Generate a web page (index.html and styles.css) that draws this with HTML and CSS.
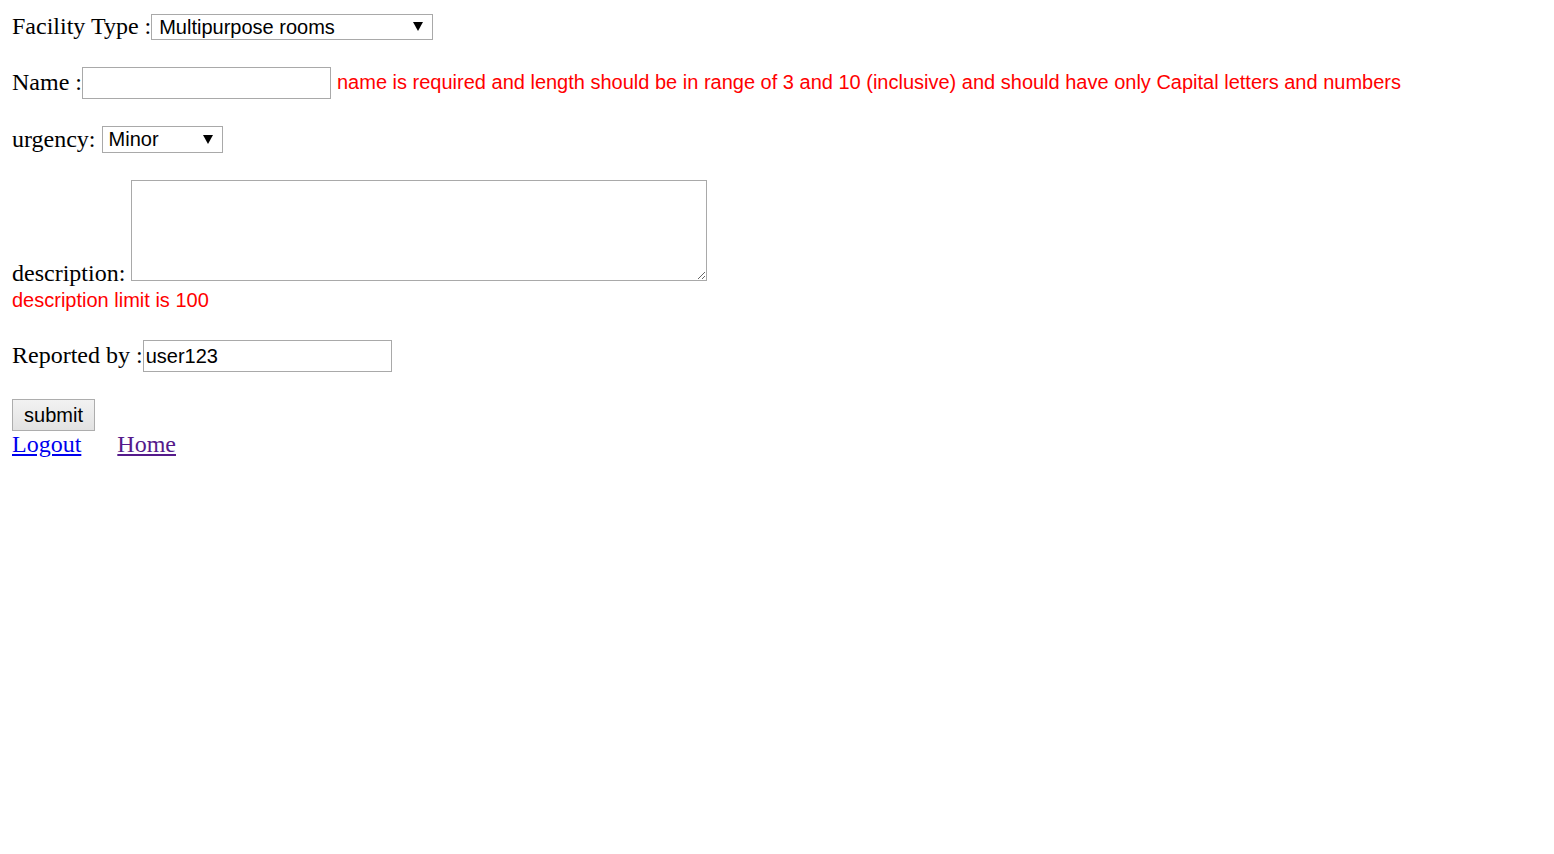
FILE: index.html
```html
<!DOCTYPE html>
<html>
<head>
<meta charset="utf-8">
<title>Report</title>
<link rel="stylesheet" href="styles.css">
</head>
<body>
<form class="form">
  <div class="row row-first">
    <label class="lbl">Facility Type :</label>
    <span class="sel sel-facility">
      <select class="select"><option>Multipurpose rooms</option></select>
    </span>
  </div>
  <div class="row row-name">
    <label class="lbl">Name :</label>
    <input class="text" type="text">
    <span class="err err-inline">name is required and length should be in range of 3 and 10 (inclusive) and should have only Capital letters and numbers</span>
  </div>
  <div class="row row-urgency">
    <label class="lbl">urgency:</label>
    <span class="sel sel-urgency">
      <select class="select"><option>Minor</option></select>
    </span>
  </div>
  <div class="row row-desc">
    <label class="lbl lbl-desc">description:</label>
    <textarea class="area"></textarea>
  </div>
  <div class="err err-block">description limit is 100</div>
  <div class="row row-reported">
    <label class="lbl">Reported by :</label>
    <input class="text text-reported" type="text" value="user123">
  </div>
  <div class="row-btn">
    <button type="button" class="btn">submit</button>
  </div>
  <div class="links">
    <a class="link" href="#">Logout</a>
    <a class="link link-visited" href="#">Home</a>
  </div>
</form>
</body>
</html>
```
FILE: styles.css
```css
html, body {
  background: #fff;
}
body {
  margin: 12px;
  font-family: "Liberation Serif", "Times New Roman", serif;
  font-size: 24px;
  color: #000;
}
.form {
  display: flex;
  flex-direction: column;
  align-items: flex-start;
}
.row {
  display: flex;
  align-items: center;
}
.row-first {
  height: 30px;
}
.row-name {
  margin-top: 25px;
  height: 32px;
}
.row-urgency {
  margin-top: 27px;
  height: 27px;
}
.row-desc {
  margin-top: 27px;
  align-items: flex-end;
}
.row-reported {
  margin-top: 28px;
  height: 32px;
}
.lbl {
  line-height: 1;
  white-space: pre;
  margin-bottom: 2px;
}
.lbl-desc {
  margin-bottom: -4px;
  margin-right: 6px;
}
.row-urgency .lbl {
  margin-right: 6px;
}
.sel {
  position: relative;
  display: inline-block;
}
.sel::after {
  content: "";
  position: absolute;
  top: 50%;
  right: 10px;
  margin-top: -5px;
  border-left: 5px solid transparent;
  border-right: 5px solid transparent;
  border-top: 9px solid #000;
  pointer-events: none;
}
.select {
  -webkit-appearance: none;
  appearance: none;
  display: block;
  box-sizing: border-box;
  border: 1px solid #a9a9a9;
  border-radius: 0;
  background: #fff;
  font-family: "Liberation Sans", Arial, sans-serif;
  font-size: 20px;
  color: #000;
  margin: 0;
  outline: none;
}
.sel-facility .select {
  width: 282px;
  height: 26px;
  padding: 0 24px 0 7px;
  line-height: 24px;
}
.sel-urgency .select {
  width: 121px;
  height: 27px;
  padding: 0 24px 0 6px;
  line-height: 25px;
}
.text {
  box-sizing: border-box;
  width: 249px;
  height: 32px;
  border: 1px solid #a9a9a9;
  margin: 0;
  padding: 0 2px;
  font-family: "Liberation Sans", Arial, sans-serif;
  font-size: 20px;
  color: #000;
  background: #fff;
  outline: none;
}
.err {
  color: #ff0000;
  font-family: "Liberation Sans", Arial, sans-serif;
  font-size: 20px;
  line-height: 23px;
  white-space: nowrap;
}
.err-inline {
  margin-left: 6px;
  margin-bottom: 2px;
}
.err-block {
  margin-top: 8px;
}
.area {
  box-sizing: border-box;
  width: 576px;
  height: 101px;
  border: 1px solid #a9a9a9;
  margin: 0;
  padding: 2px;
  font-family: "Liberation Mono", monospace;
  font-size: 20px;
  background: #fff;
  outline: none;
  display: block;
}
.row-btn {
  margin-top: 27px;
}
.btn {
  box-sizing: border-box;
  width: 83px;
  height: 32px;
  margin: 0;
  padding: 0;
  border: 1px solid #adadad;
  border-radius: 0;
  background: linear-gradient(#f2f2f2, #e2e2e2);
  font-family: "Liberation Sans", Arial, sans-serif;
  font-size: 20px;
  color: #000;
  display: block;
}
.links {
  margin-top: -1px;
  line-height: 28px;
}
.link {
  color: #0000ee;
  text-decoration: underline;
}
.link-visited {
  color: #551a8b;
  margin-left: 30px;
}
```
